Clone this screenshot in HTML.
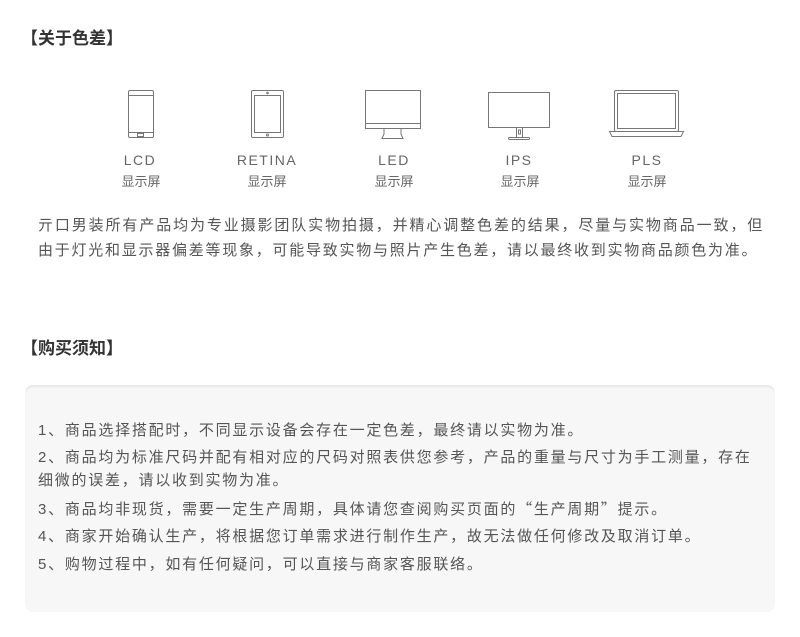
<!DOCTYPE html>
<html><head><meta charset="utf-8"><style>
*{margin:0;padding:0;box-sizing:border-box}
body{width:800px;height:637px;background:#fff;font-family:"Liberation Sans","Noto Sans CJK SC",sans-serif;color:#555;position:relative;overflow:hidden}
.h{position:absolute;left:21px;font-size:17px;font-weight:bold;color:#333;line-height:20px}
.ic{position:absolute;top:86px}
.lb{position:absolute;top:150px;width:120px;text-align:center;font-size:14px;color:#666;line-height:20px;letter-spacing:1.5px}
.lb2{position:absolute;top:172px;width:120px;text-align:center;font-size:13px;color:#666;line-height:20px}
.p{position:absolute;left:38px;width:726px;top:213px;font-size:15px;line-height:25px;letter-spacing:1.75px;text-align:justify;color:#555}
.box{position:absolute;left:25px;top:385px;width:750px;height:227px;background:#f7f7f7;border-radius:8px;box-shadow:inset 0 3px 2px -1px #e6e6e6}
.box div{position:absolute;left:13px;width:726px;font-size:15px;line-height:23px;letter-spacing:1.75px;color:#555}
.q{font-family:"Noto Sans CJK SC",sans-serif}
</style></head><body>
<div class="h" style="top:29px">【关于色差】</div>
<svg class="ic" style="left:0" width="800" height="60" viewBox="0 86 800 60" fill="none" stroke="#777" stroke-width="1">
<rect x="128.5" y="90.5" width="25" height="47" rx="1.5"/><line x1="129" y1="95.5" x2="153" y2="95.5"/><line x1="129" y1="132.5" x2="153" y2="132.5"/><rect x="137.5" y="133.5" width="6" height="3"/>
<rect x="251.5" y="90.5" width="32" height="47" rx="1.5"/><rect x="254.5" y="95.5" width="26" height="37"/><circle cx="267.5" cy="93" r=".8"/><circle cx="267.5" cy="135" r="1"/>
<rect x="365.5" y="90.5" width="55" height="38"/><line x1="366" y1="123.5" x2="420" y2="123.5"/><path d="M384 129 L384 134 L382 138.5 L403 138.5 L401 134 L401 129"/>
<rect x="488.5" y="92.5" width="61" height="35"/><path d="M516.5 128v10M522.5 128v10M518.5 130h2v4h-2z"/><rect x="508.5" y="137.5" width="21" height="2" rx="1"/>
<rect x="614.5" y="90.5" width="64" height="41" rx="1.5"/><rect x="617.5" y="93.5" width="58" height="35"/><path d="M609.5 131.5 L683.5 131.5 L681 136.5 L612 136.5 Z"/>
</svg>
<div class="lb" style="left:80px">LCD</div><div class="lb2" style="left:81px">显示屏</div>
<div class="lb" style="left:207px">RETINA</div><div class="lb2" style="left:207px">显示屏</div>
<div class="lb" style="left:334px">LED</div><div class="lb2" style="left:334px">显示屏</div>
<div class="lb" style="left:459px">IPS</div><div class="lb2" style="left:460px">显示屏</div>
<div class="lb" style="left:587px">PLS</div><div class="lb2" style="left:587px">显示屏</div>
<div class="p">亓口男装所有产品均为专业摄影团队实物拍摄，并精心调整色差的结果，尽量与实物商品一致，但由于灯光和显示器偏差等现象，可能导致实物与照片产生色差，请以最终收到实物商品颜色为准。</div>
<div class="h" style="top:339px">【购买须知】</div>
<div class="box">
<div style="top:34px">1、商品选择搭配时，不同显示设备会存在一定色差，最终请以实物为准。</div>
<div style="top:61px">2、商品均为标准尺码并配有相对应的尺码对照表供您参考，产品的重量与尺寸为手工测量，存在细微的误差，请以收到实物为准。</div>
<div style="top:112px">3、商品均非现货，需要一定生产周期，具体请您查阅购买页面的<span class="q">“</span>生产周期<span class="q">”</span>提示。</div>
<div style="top:140px">4、商家开始确认生产，将根据您订单需求进行制作生产，故无法做任何修改及取消订单。</div>
<div style="top:168px">5、购物过程中，如有任何疑问，可以直接与商家客服联络。</div>
</div>
</body></html>
